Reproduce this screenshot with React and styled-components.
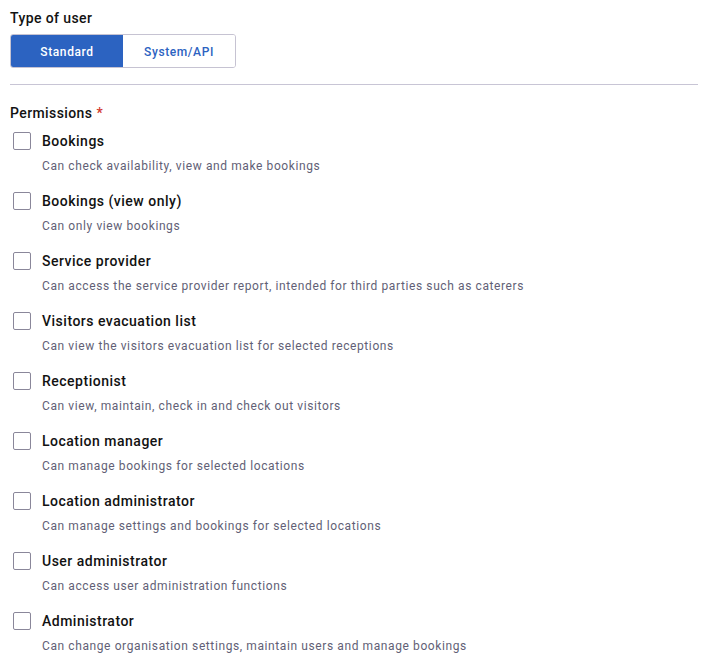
import React, { useState } from 'react'
import styled, { createGlobalStyle } from 'styled-components'

const GlobalStyle = createGlobalStyle`
  body {
    margin: 0;
    background: #fff;
    font-family: Roboto, "Liberation Sans", sans-serif;
    color: #121212;
  }
`

const Page = styled.div`
  padding: 9px 9px 0 10px;
`

const Label = styled.div`
  font-size: 14px;
  font-weight: 500;
  line-height: 18px;
  letter-spacing: 0.4px;
`

const Toggle = styled.div`
  display: flex;
  width: 226px;
  height: 34px;
  margin-top: 7px;
  border: 1px solid #c6c3d2;
  border-radius: 3px;
  overflow: hidden;
  box-sizing: border-box;
`

const Segment = styled.button`
  flex: ${(p) => (p.$wide ? '0 0 112px' : '1')};
  border: 0;
  margin: 0;
  padding-top: 2px;
  font-family: inherit;
  font-size: 12px;
  font-weight: 500;
  letter-spacing: 0.6px;
  background: ${(p) => (p.$active ? '#2c63c1' : '#fff')};
  color: ${(p) => (p.$active ? '#fff' : '#2c63c1')};
  cursor: pointer;
`

const Divider = styled.hr`
  border: 0;
  border-top: 1px solid #c8c5d5;
  margin: 16px 0 19px;
`

const Required = styled.span`
  color: #d2372c;
  margin-left: 4px;
`

const List = styled.div`
  display: flex;
  flex-direction: column;
  gap: 17px;
  margin-top: 10px;
`

const Option = styled.label`
  display: grid;
  grid-template-columns: 18px 1fr;
  column-gap: 11px;
  row-gap: 7px;
  padding-left: 3px;
  cursor: pointer;
`

const Box = styled.span`
  width: 18px;
  height: 18px;
  box-sizing: border-box;
  border: 1px solid #8a879a;
  border-radius: 2px;
  background: ${(p) => (p.$checked ? '#2c63c1' : '#fff')};
`

const Title = styled.div`
  font-size: 14px;
  font-weight: 500;
  line-height: 18px;
  letter-spacing: 0.5px;
`

const Desc = styled.div`
  grid-column: 2;
  font-size: 12px;
  line-height: 18px;
  color: #625f76;
  letter-spacing: 0.6px;
`

const permissions = [
  ['Bookings', 'Can check availability, view and make bookings'],
  ['Bookings (view only)', 'Can only view bookings'],
  ['Service provider', 'Can access the service provider report, intended for third parties such as caterers'],
  ['Visitors evacuation list', 'Can view the visitors evacuation list for selected receptions'],
  ['Receptionist', 'Can view, maintain, check in and check out visitors'],
  ['Location manager', 'Can manage bookings for selected locations'],
  ['Location administrator', 'Can manage settings and bookings for selected locations'],
  ['User administrator', 'Can access user administration functions'],
  ['Administrator', 'Can change organisation settings, maintain users and manage bookings'],
]

export default function App() {
  const [type, setType] = useState('standard')
  const [checked, setChecked] = useState({})

  return (
    <Page>
      <GlobalStyle />
      <Label>Type of user</Label>
      <Toggle>
        <Segment $wide $active={type === 'standard'} onClick={() => setType('standard')}>
          Standard
        </Segment>
        <Segment $active={type === 'api'} onClick={() => setType('api')}>
          System/API
        </Segment>
      </Toggle>
      <Divider />
      <Label>
        Permissions<Required>*</Required>
      </Label>
      <List>
        {permissions.map(([title, desc]) => (
          <Option key={title} onClick={() => setChecked({ ...checked, [title]: !checked[title] })}>
            <Box $checked={checked[title]} />
            <Title>{title}</Title>
            <Desc>{desc}</Desc>
          </Option>
        ))}
      </List>
    </Page>
  )
}
